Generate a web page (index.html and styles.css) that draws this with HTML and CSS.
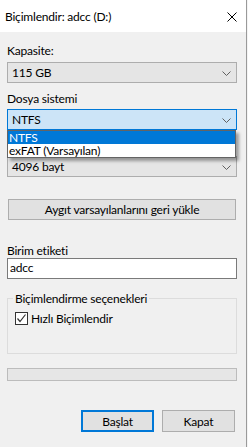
FILE: index.html
```html
<!DOCTYPE html>
<html lang="tr">
<head>
  <meta charset="utf-8">
  <title>Biçimlendir: adcc (D:)</title>
  <link rel="stylesheet" href="styles.css">
</head>
<body>

<div class="window">

  <div class="titlebar">
    <span class="title">Biçimlendir: adcc (D:)</span>
    <svg class="close" width="10" height="10" viewBox="0 0 10 10">
      <path d="M0.5 0.5 L9.5 9.5 M9.5 0.5 L0.5 9.5" stroke="#000" stroke-width="1" fill="none"/>
    </svg>
  </div>

  <div class="content">

    <div class="label first">Kapasite:</div>
    <div class="combo">
      <span>115 GB</span>
      <svg class="chev" width="9" height="5" viewBox="0 0 9 5"><path d="M0.5 0.5 L4.5 4.5 L8.5 0.5" stroke="#606060" fill="none"/></svg>
    </div>

    <div class="label">Dosya sistemi</div>
    <div class="combo-wrap">
      <div class="combo focused">
        <span>NTFS</span>
        <svg class="chev" width="9" height="5" viewBox="0 0 9 5"><path d="M0.5 0.5 L4.5 4.5 L8.5 0.5" stroke="#606060" fill="none"/></svg>
      </div>
      <!-- open dropdown list lies over the next field -->
      <ul class="droplist">
        <li class="selected">NTFS</li>
        <li>exFAT (Varsayılan)</li>
      </ul>
    </div>

    <div class="combo covered">
      <span>4096 bayt</span>
      <svg class="chev" width="9" height="5" viewBox="0 0 9 5"><path d="M0.5 0.5 L4.5 4.5 L8.5 0.5" stroke="#606060" fill="none"/></svg>
    </div>

    <div class="button wide">Aygıt varsayılanlarını geri yükle</div>

    <div class="label fourth">Birim etiketi</div>
    <div class="textbox">adcc</div>

    <fieldset class="group">
      <legend>Biçimlendirme seçenekleri</legend>
      <div class="check-row">
        <span class="checkbox">
          <svg width="11" height="11" viewBox="0 0 11 11"><path d="M1.5 5.5 L4 8.5 L9.5 1.5" stroke="#333" stroke-width="1.2" fill="none"/></svg>
        </span>
        <span>Hızlı Biçimlendir</span>
      </div>
    </fieldset>

    <div class="progress"></div>

    <div class="actions">
      <div class="button default">Başlat</div>
      <div class="button">Kapat</div>
    </div>

  </div>
</div>

</body>
</html>
```

FILE: styles.css
```css
html, body {
	margin: 0;
	padding: 0;
}

body {
	background-color: #f4f4f4;
	font-family: Lato, "Noto Sans", sans-serif;
	font-size: 12px;
	letter-spacing: -0.2px;
	color: #000;
	width: 248px;
	height: 447px;
	overflow: hidden;
}

.window {
	width: 246px;
	height: 447px;
	background-color: #f0f0f0;
	border-right: 1px solid #9a9a9a;
}

.titlebar {
	height: 32px;
	background-color: #fff;
	display: flex;
	align-items: center;
	justify-content: space-between;
	padding: 0 9px 0 5px;
}
.title {
	line-height: 15px;
	margin-top: 1px;
}
.close {
	display: block;
	margin-top: 1px;
}

.content {
	padding: 0 9px 0 7px;
}

.label {
	height: 15px;
	line-height: 15px;
	margin-top: 8px;
	margin-bottom: 3px;
}
.label.first {
	margin-top: 11px;
	margin-bottom: 4px;
}
.label.fourth {
	margin-top: 23px;
	margin-bottom: 0px;
}

.combo {
	box-sizing: border-box;
	height: 21px;
	background-color: #e5e5e5;
	border: 1px solid #adadad;
	display: flex;
	align-items: center;
	justify-content: space-between;
	padding: 0 5px 0 4px;
}
.combo span {
	line-height: 15px;
}
.combo .chev {
	display: block;
	margin-top: 1px;
}
.combo.focused {
	background-color: #cce4f7;
	border-color: #0078d7;
}
.combo.covered {
	margin-top: 26px;
}

.combo-wrap {
	position: relative;
}

.droplist {
	position: absolute;
	left: 0;
	right: 1px;
	top: 21px;
	margin: 0;
	padding: 0;
	list-style: none;
	background-color: #fff;
	border: 1px solid #646464;
	box-shadow: 3px 3px 3px rgba(0, 0, 0, 0.35);
	z-index: 2;
}
.droplist li {
	height: 13px;
	line-height: 13px;
	padding-left: 1px;
}
.droplist li.selected {
	background-color: #0078d7;
	color: #fff;
}

.button {
	box-sizing: border-box;
	height: 22px;
	background-color: #e1e1e1;
	border: 1px solid #adadad;
	display: flex;
	align-items: center;
	justify-content: center;
	line-height: 15px;
}
.button.wide {
	height: 21px;
	margin: 22px 1px 0 1px;
}
.button.default {
	border: 2px solid #0078d7;
}

.textbox {
	box-sizing: border-box;
	height: 21px;
	background-color: #fff;
	border: 1px solid #7a7a7a;
	padding-left: 2px;
	line-height: 18px;
}

.group {
	margin: 12px 0 0 0;
	padding: 5px 0 27px 5px;
	border: 1px solid #dcdcdc;
	min-width: 0;
}
.group legend {
	padding: 0 2px;
	line-height: 15px;
}

.check-row {
	display: flex;
	align-items: center;
	gap: 3px;
	height: 15px;
	padding-left: 2px;
}
.checkbox {
	box-sizing: border-box;
	width: 13px;
	height: 13px;
	border: 1px solid #333;
	background-color: #fff;
	display: flex;
	align-items: center;
	justify-content: center;
}
.checkbox svg {
	display: block;
}

.progress {
	box-sizing: border-box;
	height: 13px;
	margin-top: 14px;
	background-color: #e6e6e6;
	border: 1px solid #bcbcbc;
}

.actions {
	display: flex;
	justify-content: flex-end;
	gap: 8px;
	margin-top: 29px;
	padding-right: 2px;
}
.actions .button {
	width: 73px;
}
```
